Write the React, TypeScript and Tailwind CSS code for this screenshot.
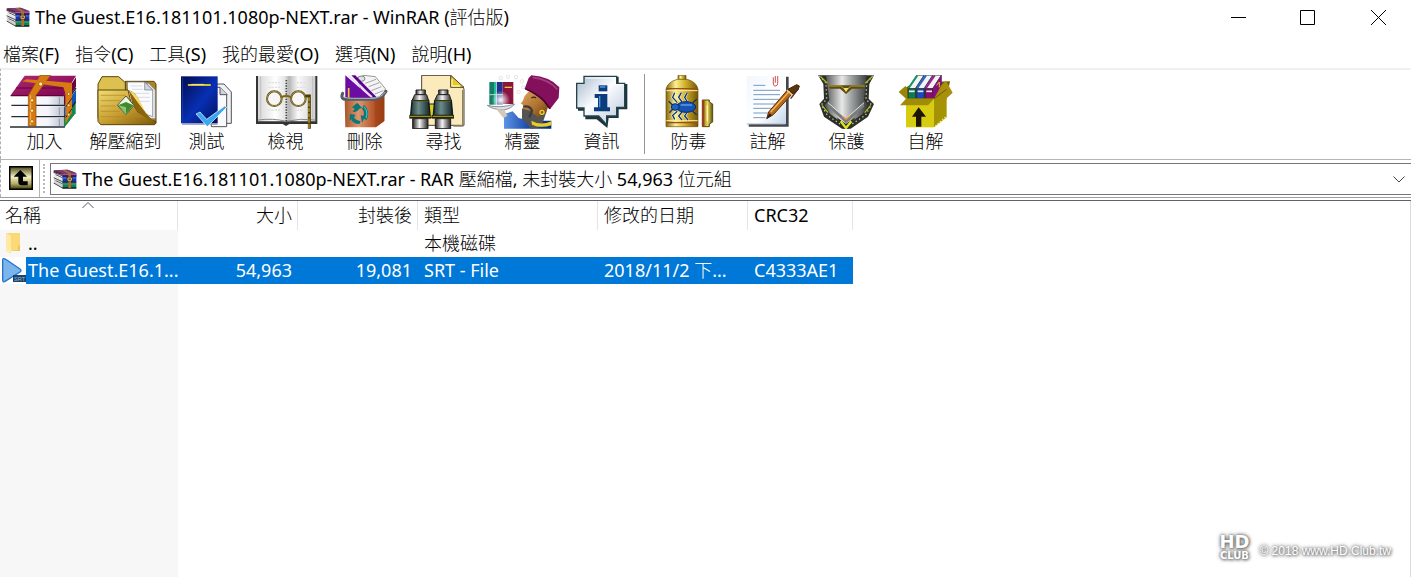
import { useState } from 'react'
import type { ReactNode } from 'react'
import clsx from 'clsx'

const ARCHIVE = 'The Guest.E16.181101.1080p-NEXT.rar'

const MENUS = ['檔案(F)', '指令(C)', '工具(S)', '我的最愛(O)', '選項(N)', '說明(H)']

function ArchiveIcon() {
  return (
    <svg viewBox="0 0 72 60" className="h-5 w-6 shrink-0" aria-hidden="true">
      <path d="M2 4 L44 2 L70 12 L70 22 L28 22 L2 12z" fill="#5c2450" />
      <path d="M4 4 L44 2 L68 11 L28 13z" fill="#7c3c70" />
      <path d="M28 14 L70 13 L70 22 L28 22z" fill="#b050a8" />
      <path d="M28 22 L70 22 L70 38 L28 38z" fill="#1531c8" />
      <path d="M28 40 L70 40 L70 57 L28 57z" fill="#128a35" />
      <path d="M30 27h38M30 45h38" stroke="#4c8cf0" strokeWidth="3" />
      <path d="M2 10 L28 18 L28 22 L8 16 L8 20 L28 28 L28 36 L4 26z" fill="#e8e8e8" />
      <path d="M2 27 L28 37 L28 40 L8 34 L8 38 L28 46 L28 56 L4 44z" fill="#d0d0d0" />
      <path d="M2 10 L28 20M2 26 L28 38M2 42 L28 57M8 17 L28 26M8 35 L28 44" stroke="#333" strokeWidth="2.5" />
      <path d="M28 21h42M28 39h42M28 57h42" stroke="#161632" strokeWidth="4" />
      <path d="M34 2 L54 12 V57 H46 V14 L28 4z" fill="#a87030" />
      <rect x="41" y="23" width="18" height="14" fill="#4a2a10" />
      <path d="M45 27h10v7H45z" fill="none" stroke="#e0c080" strokeWidth="3" />
    </svg>
  )
}

function AddIcon() {
  return (
    <svg viewBox="15 21 237 162" className="h-[54px] w-[79px]" aria-hidden="true">
      <defs>
        <linearGradient id="addCover" x1="0" y1="0" x2="1" y2="1">
          <stop offset="0" stopColor="#b02a76" />
          <stop offset="1" stopColor="#7e004c" />
        </linearGradient>
        <linearGradient id="addPages" x1="0" x2="1">
          <stop offset="0" stopColor="#fff" />
          <stop offset="0.7" stopColor="#f4f4fa" />
          <stop offset="1" stopColor="#b9bfce" />
        </linearGradient>
      </defs>
      {/* spines */}
      <path d="M192 150 L227 104 V136 L192 180z" fill="#128a4c" />
      <path d="M192 118 L228 65 V100 L192 147z" fill="#1454b4" />
      <path d="M190 84 L228 28 V56 L192 112z" fill="#6c0440" />
      <path d="M192 114 L228 60M192 148 L227 102" stroke="#0c1c34" strokeWidth="4" />
      {/* page blocks */}
      <path d="M32 84h160v27H36zM34 115h158v29H36zM34 149h158v26H34z" fill="url(#addPages)" />
      <path d="M34 112h158M34 146h158M30 177h164" stroke="#242c34" strokeWidth="4" />
      <path d="M178 88V110M178 118V142M178 152V174" stroke="#8c98b0" strokeWidth="3" />
      <path d="M74 23 L228 23 L191 83 L32 82z" fill="url(#addCover)" />
      <path d="M48 60H200" stroke="#5c0838" strokeWidth="3" />
      <path d="M32 83H191" stroke="#600038" strokeWidth="4" />
      {/* straps */}
      <path d="M120 22h32L108 82v92H85V82z" fill="#d87a12" stroke="#8a4a08" strokeWidth="2" />
      <path d="M66 40 L80 34 L212 44 L216 62 L190 58z" fill="#d87a12" />
      <path d="M190 58 L216 44 V134 L196 168 V76z" fill="#d87a12" />
      <path d="M198 116l18-26M198 148l18-26" stroke="#16283c" strokeWidth="3" />
      <path d="M92 82v90" stroke="#ffb54a" strokeWidth="3" />
      <g fill="#fff0b0" stroke="#965a08" strokeWidth="2">
        <circle cx="122" cy="48" r="6" />
        <circle cx="96" cy="97" r="5" />
        <circle cx="96" cy="128" r="5" />
        <circle cx="96" cy="160" r="5" />
        <circle cx="206" cy="78" r="4" />
        <circle cx="206" cy="112" r="4" />
        <circle cx="206" cy="140" r="4" />
      </g>
    </svg>
  )
}

function ExtractIcon() {
  return (
    <svg viewBox="258 21 237 162" className="h-[54px] w-[79px]" aria-hidden="true">
      <defs>
        <linearGradient id="exFolder" x1="0" y1="0" x2="1" y2="1">
          <stop offset="0" stopColor="#f0dc74" />
          <stop offset="0.5" stopColor="#c8a034" />
          <stop offset="1" stopColor="#7c5808" />
        </linearGradient>
      </defs>
      <path d="M294 48 L306 26 H356 L374 42 H378 V160 H300 L294 150z" fill="#dcc050" stroke="#5c4408" strokeWidth="3" />
      <path d="M376 40H462L468 48V166H376z" fill="#a88424" stroke="#5c4408" strokeWidth="3" />
      <path d="M390 46H446L466 66V152L430 152z" fill="#e8ecf2" stroke="#70767e" strokeWidth="2" />
      <path d="M382 42H434L458 66V146L384 120z" fill="#fafbfd" stroke="#70767e" strokeWidth="2" />
      <path d="M434 42V66H458z" fill="#cfd6e2" stroke="#70767e" strokeWidth="2" />
      <path d="M392 54H426M396 64H430M402 76H448M410 88H450M418 100H450" stroke="#d8dce4" strokeWidth="3" />
      <path d="M294 66 H384 L392 100 L414 132 L468 162 L464 170 H302 L294 160z" fill="url(#exFolder)" stroke="#5c4408" strokeWidth="3" />
      <path d="M302 82H376M302 98H360M302 114H346M302 130H360M302 146H426" stroke="#b48a20" strokeWidth="3" opacity="0.7" />
      <path d="M384 66 Q392 80 396 108 Q420 146 464 162 Q432 134 420 104 Q410 72 384 66z" fill="#8c640c" />
      <path d="M386 66 Q412 76 424 108 Q436 138 462 158 Q430 128 414 104z" fill="#f4d870" />
      <path d="M378 84 L402 112 L378 140 L352 112z" fill="#eef6e4" stroke="#485838" strokeWidth="3" />
      <path d="M354 112 L378 102 L400 112 L378 138z" fill="#3e8a2e" />
      <path d="M378 118v20L356 112z" fill="#8cc470" />
    </svg>
  )
}

function TestIcon() {
  return (
    <svg viewBox="501 21 237 162" className="h-[54px] w-[79px]" aria-hidden="true">
      <defs>
        <linearGradient id="testBook" x1="0" y1="0" x2="1" y2="1">
          <stop offset="0" stopColor="#020a4c" />
          <stop offset="0.55" stopColor="#0830b4" />
          <stop offset="1" stopColor="#02105c" />
        </linearGradient>
      </defs>
      <path d="M640 48H672L694 72V166H640z" fill="#eef0f4" stroke="#555" strokeWidth="3" />
      <path d="M634 58H660L680 78V176H634z" fill="#fafafc" stroke="#555" strokeWidth="3" />
      <path d="M660 58V80H682" fill="#ccd2de" stroke="#555" strokeWidth="3" />
      <rect x="543" y="25" width="110" height="141" fill="url(#testBook)" />
      <path d="M548 25v140" stroke="#2448b0" strokeWidth="2" />
      <path d="M546 168H652" stroke="#8c94ac" strokeWidth="4" />
      <path d="M566 51H630" stroke="#d8c030" strokeWidth="6" strokeLinecap="round" />
      <path d="M574 49H612" stroke="#fffbd0" strokeWidth="2" />
      <path d="M588 138 L600 132 L620 154 L674 114 L680 118 L622 176z" fill="#38a8f4" stroke="#fff" strokeWidth="2" />
    </svg>
  )
}

function ViewIcon() {
  return (
    <svg viewBox="18 21 237 162" className="h-[54px] w-[79px]" aria-hidden="true">
      <defs>
        <linearGradient id="viewPage" x1="0" x2="1">
          <stop offset="0" stopColor="#d6d6d6" />
          <stop offset="0.3" stopColor="#fff" />
          <stop offset="0.47" stopColor="#e4e4e4" />
          <stop offset="0.54" stopColor="#b4b4b4" />
          <stop offset="0.7" stopColor="#fafafa" />
          <stop offset="1" stopColor="#d0d0d0" />
        </linearGradient>
      </defs>
      <path d="M48 24H232V168H148L138 174L128 168H48z" fill="#343434" />
      <path d="M54 24H226V160H54z" fill="url(#viewPage)" />
      <path d="M54 156Q100 150 138 160Q180 150 226 156" fill="none" stroke="#888" strokeWidth="3" />
      <path d="M62 26V152M218 26V152" stroke="#b4b4b4" strokeWidth="2" />
      <path d="M139 36V160" stroke="#444" strokeWidth="5" strokeDasharray="4 4" />
      <path d="M84 44h36M84 58h36M160 44h40M160 58h40M84 126h36M160 126h30" stroke="#e0e0e0" strokeWidth="4" strokeDasharray="7 3" />
      <circle cx="103" cy="92" r="22" fill="#f6f6f6" stroke="#5c4810" strokeWidth="6" />
      <circle cx="175" cy="92" r="22" fill="#f6f6f6" stroke="#5c4810" strokeWidth="6" />
      <circle cx="103" cy="92" r="22" fill="none" stroke="#c8b468" strokeWidth="2" />
      <circle cx="175" cy="92" r="22" fill="none" stroke="#c8b468" strokeWidth="2" />
      <path d="M124 88Q138 80 154 88" fill="none" stroke="#7c6410" strokeWidth="6" />
      <path d="M196 84H208V182" fill="none" stroke="#4c3c08" strokeWidth="9" />
      <path d="M207 88V180" stroke="#e0c040" strokeWidth="3" strokeDasharray="12 4" />
    </svg>
  )
}

function DeleteIcon() {
  return (
    <svg viewBox="255 21 237 162" className="h-[54px] w-[79px]" aria-hidden="true">
      <defs>
        <linearGradient id="delBin" x1="0" x2="1">
          <stop offset="0" stopColor="#a85428" />
          <stop offset="0.35" stopColor="#dc9670" />
          <stop offset="0.8" stopColor="#b04c20" />
          <stop offset="1" stopColor="#7c2c0c" />
        </linearGradient>
      </defs>
      <path d="M352 30 L372 22 L406 26 L436 62 L430 88 H370z" fill="#f4f4f6" stroke="#666" strokeWidth="2" />
      <path d="M376 46L408 34M386 56L418 44M394 68L424 56M404 78L430 68" stroke="#a4a4a4" strokeWidth="3" />
      <ellipse cx="364" cy="32" rx="11" ry="8" fill="#dce0e4" stroke="#555" strokeWidth="2" />
      <path d="M316 22 L394 90 H316z" fill="#6c0ca4" />
      <path d="M334 22 H346 L410 88 H398z" fill="#5c0090" />
      <path d="M326 23 L396 86" stroke="#e8d8fc" strokeWidth="4" />
      <path d="M326 60V90" stroke="#e8cc28" strokeWidth="5" />
      <path d="M314 92 H404 L432 84 V160 L408 178 H316z" fill="url(#delBin)" />
      <path d="M404 94 L434 80 V158 L406 178z" fill="#a44418" opacity="0.75" />
      <path d="M308 76 Q300 94 320 94 H404 Q424 92 438 70" fill="none" stroke="#545c64" strokeWidth="9" strokeLinecap="round" />
      <path d="M310 86 Q320 92 340 91 H402 Q424 88 436 72" fill="none" stroke="#b0b8c0" strokeWidth="3" />
      <g fill="#087878">
        <path d="M352 104 L366 120 L358 122 Q352 132 338 132 L344 122 L336 118z" />
        <path d="M372 110 Q392 128 380 156 L372 152 L366 164 L362 142 L370 144 Q376 132 366 122z" />
        <path d="M330 138 L346 140 L342 150 Q350 158 362 160 L358 168 Q338 168 334 154 L328 158z" />
      </g>
      <path d="M372 116 Q386 132 378 150" fill="none" stroke="#5cd0d0" strokeWidth="3" />
    </svg>
  )
}

function FindIcon() {
  return (
    <svg viewBox="492 21 237 162" className="h-[54px] w-[79px]" aria-hidden="true">
      <defs>
        <linearGradient id="findTube" x1="0" x2="1">
          <stop offset="0" stopColor="#1c3434" />
          <stop offset="0.4" stopColor="#6c8c8c" />
          <stop offset="1" stopColor="#142626" />
        </linearGradient>
        <linearGradient id="findSteel" x1="0" x2="1">
          <stop offset="0" stopColor="#222" />
          <stop offset="0.45" stopColor="#f4f4f4" />
          <stop offset="1" stopColor="#222" />
        </linearGradient>
      </defs>
      <path d="M545 22H632L672 62V172H545z" fill="#fbebbc" stroke="#4c4430" strokeWidth="3" />
      <path d="M632 22V58H672z" fill="#e8c828" stroke="#4c4430" strokeWidth="3" />
      <path d="M636 34V54H660" fill="none" stroke="#fff4a0" strokeWidth="4" />
      <path d="M668 66V174H640" fill="none" stroke="#8c8468" strokeWidth="4" />
      <rect x="566" y="108" width="20" height="40" fill="#e0cc20" stroke="#222" strokeWidth="3" />
      {[0, 68].map((dx) => (
        <g key={dx} transform={`translate(${dx} 0)`}>
          <path d="M528 66H556V80H528z" fill="url(#findSteel)" stroke="#222" strokeWidth="3" />
          <path d="M524 80H560L566 98H516z" fill="url(#findSteel)" stroke="#222" strokeWidth="3" />
          <path d="M516 98H566L570 142H512z" fill="url(#findTube)" stroke="#0c1818" strokeWidth="4" />
          <path d="M516 99H566" stroke="#8c7c18" strokeWidth="2" />
          <rect x="508" y="141" width="66" height="11" fill="#242408" />
          <path d="M510 145H572" stroke="#b8a420" strokeWidth="3" />
          <path d="M518 152H564V182H518z" fill="url(#findSteel)" stroke="#222" strokeWidth="3" />
        </g>
      ))}
    </svg>
  )
}

function WizardIcon() {
  return (
    <svg viewBox="39 21 237 162" className="h-[54px] w-[79px]" aria-hidden="true">
      <defs>
        <linearGradient id="wizFace" x1="0" y1="0" x2="1" y2="1">
          <stop offset="0" stopColor="#e4a860" />
          <stop offset="0.6" stopColor="#a86c2c" />
          <stop offset="1" stopColor="#5c3808" />
        </linearGradient>
        <linearGradient id="wizRobe" x1="0" x2="1">
          <stop offset="0" stopColor="#5c94e4" />
          <stop offset="0.5" stopColor="#1c4cac" />
          <stop offset="1" stopColor="#0c2870" />
        </linearGradient>
        <radialGradient id="wizGlow">
          <stop offset="0" stopColor="#fff" />
          <stop offset="1" stopColor="#fff" stopOpacity="0" />
        </radialGradient>
      </defs>
      <g fill="none" stroke="#e4e4e4" strokeWidth="3">
        <circle cx="92" cy="30" r="5" />
        <circle cx="114" cy="26" r="5" />
        <circle cx="138" cy="27" r="5" />
        <circle cx="156" cy="40" r="5" />
        <circle cx="160" cy="58" r="5" />
        <circle cx="146" cy="72" r="5" />
      </g>
      {/* books on the tray */}
      <path d="M58 42H72V110H58z" fill="#147c68" />
      <path d="M72 42H78V110H72z" fill="#20c094" />
      <path d="M80 42H98V110H80z" fill="#1c348c" />
      <path d="M98 42H130V108H98z" fill="#8a1440" />
      <path d="M104 58H126" stroke="#e8c840" strokeWidth="4" />
      <path d="M58 80H98" stroke="#a0e8d8" strokeWidth="3" />
      <circle cx="92" cy="96" r="28" fill="url(#wizGlow)" />
      <path d="M52 112Q92 122 134 108Q124 122 100 126Q66 124 52 112z" fill="#dce0e8" stroke="#8c9098" strokeWidth="3" />
      {/* body */}
      <path d="M102 138L128 130L146 150L180 158H244V182H102z" fill="url(#wizRobe)" />
      <path d="M78 122L104 126L112 144L100 150z" fill="#d4c8b8" />
      <path d="M156 122L176 112L206 128L230 130L214 176L184 182L156 152z" fill="#545454" />
      <path d="M180 66L164 84L158 100L152 106L160 112L158 122L180 128L204 148L228 134L240 102L214 78z" fill="url(#wizFace)" />
      <path d="M184 90q8-5 14 0" fill="none" stroke="#3c2004" strokeWidth="4" />
      <path d="M160 116Q180 112 186 128L178 148" fill="none" stroke="#3c3c3c" strokeWidth="7" />
      <circle cx="216" cy="133" r="6" fill="none" stroke="#f0d430" strokeWidth="4" />
      {/* fez */}
      <path d="M184 22L176 30L164 62Q196 78 218 98L240 124L266 90L268 58Q240 26 184 22z" fill="#84105c" />
      <path d="M188 28Q236 34 262 64" fill="none" stroke="#a43c84" strokeWidth="5" />
      <path d="M166 62Q200 76 222 98L240 122" fill="none" stroke="#4c0434" strokeWidth="5" />
      <path d="M184 158Q212 174 244 160V172Q212 182 186 170z" fill="#e8cc28" />
    </svg>
  )
}

function InfoIcon() {
  return (
    <svg viewBox="276 21 237 162" className="h-[54px] w-[79px]" aria-hidden="true">
      <defs>
        <linearGradient id="infoBox" x1="0" y1="0" x2="1" y2="1">
          <stop offset="0" stopColor="#a8b8cc" />
          <stop offset="0.45" stopColor="#fafcff" />
          <stop offset="1" stopColor="#b4c4d8" />
        </linearGradient>
      </defs>
      <path d="M346 26H446V48H472V124H446V150H416L412 180L380 154H346V128H324V48H346z" fill="#1c343c" />
      <path d="M342 25H440V46H464V118H440V144H410V170L386 144H342V120H320V46H342z" fill="url(#infoBox)" stroke="#24444c" strokeWidth="4" />
      <path d="M346 30H436V50H460" fill="none" stroke="#fff" strokeWidth="3" />
      <g fill="#0c3c7c">
        <rect x="386" y="52" width="26" height="18" />
        <path d="M374 78H412V118H420V130H372V118H384V90H374z" />
      </g>
      <path d="M390 57H406M389 84V118" stroke="#4898e0" strokeWidth="4" />
    </svg>
  )
}

function VirusIcon() {
  return (
    <svg viewBox="537 21 237 162" className="h-[54px] w-[79px]" aria-hidden="true">
      <defs>
        <linearGradient id="virCan" x1="0" x2="1">
          <stop offset="0" stopColor="#86680c" />
          <stop offset="0.3" stopColor="#fcf090" />
          <stop offset="0.6" stopColor="#d0b02c" />
          <stop offset="1" stopColor="#745404" />
        </linearGradient>
        <linearGradient id="virCap" x1="0" x2="1">
          <stop offset="0" stopColor="#8c6010" />
          <stop offset="0.5" stopColor="#e8d858" />
          <stop offset="1" stopColor="#5c5010" />
        </linearGradient>
      </defs>
      <path d="M624 22H648V36H624z" fill="url(#virCan)" stroke="#6c5008" strokeWidth="2" />
      <path d="M588 64Q592 42 622 34H652Q680 42 684 64V176H588z" fill="url(#virCan)" stroke="#6c5008" strokeWidth="2" />
      <path d="M589 62H683M589 164H683" stroke="#a04c1c" strokeWidth="4" />
      <path d="M589 68H683M589 158H683" stroke="#f8f0a0" strokeWidth="3" />
      <path d="M697 96H718V102L728 108V162L718 168V176H697z" fill="url(#virCap)" stroke="#5c4810" strokeWidth="3" />
      <path d="M700 98V174" stroke="#a43c1c" strokeWidth="6" />
      <path d="M712 112V160" stroke="#fcf8b0" strokeWidth="4" />
      <g fill="none" stroke="#f4f8fc" strokeWidth="7">
        <path d="M622 104L608 88L614 74M636 102L626 88L634 74M652 102L644 88L652 74M622 130L608 142L614 154M636 132L626 144L636 156M652 132L644 144L654 156" />
      </g>
      <g fill="none" stroke="#103468" strokeWidth="4">
        <path d="M622 104L608 88L614 74M636 102L626 88L634 74M652 102L644 88L652 74M622 130L608 142L614 154M636 132L626 144L636 156M652 132L644 144L654 156M608 112L596 100M608 124L598 134" />
      </g>
      <path d="M668 104L680 94M668 130L680 140" stroke="#103468" strokeWidth="4" />
      <ellipse cx="648" cy="117" rx="29" ry="16" fill="#1454b4" stroke="#082868" strokeWidth="3" />
      <ellipse cx="616" cy="117" rx="12" ry="10" fill="#1c64c4" stroke="#082868" strokeWidth="3" />
      <path d="M632 111H666" stroke="#68a4ec" strokeWidth="4" />
    </svg>
  )
}

function CommentIcon() {
  return (
    <svg viewBox="24 21 237 162" className="h-[54px] w-[79px]" aria-hidden="true">
      <defs>
        <linearGradient id="comPage" x1="0" y1="0" x2="1" y2="1">
          <stop offset="0" stopColor="#f2f7fd" />
          <stop offset="0.6" stopColor="#fff" />
          <stop offset="1" stopColor="#c0d4ec" />
        </linearGradient>
      </defs>
      <path d="M90 26H206V176H86z" fill="#44464c" />
      <path d="M80 24H198V168H80z" fill="url(#comPage)" />
      <path d="M80 168H196" stroke="#a8b4c8" strokeWidth="3" />
      <path d="M100 52H136M100 67H180M100 80H180M100 94H176M100 108H166M100 121H158M100 135H144M100 149H136" stroke="#7898c4" strokeWidth="3" />
      <path d="M160 28V48Q162 56 168 54Q173 52 173 46V24M166 24V44" fill="none" stroke="#d45050" strokeWidth="3" />
      <path d="M140 152L146 132L204 64L218 76L160 140z" fill="#b86818" stroke="#54300c" strokeWidth="3" />
      <path d="M204 64L230 50L238 54L234 66L218 78z" fill="#5c3410" stroke="#3c2008" strokeWidth="3" />
      <path d="M152 132L208 70" stroke="#f8bc58" strokeWidth="4" />
      <path d="M140 152L148 136L156 142z" fill="#2c1c08" />
      <path d="M200 66L218 82" stroke="#f0d890" strokeWidth="4" />
      <path d="M232 66L212 92" stroke="#54300c" strokeWidth="4" />
    </svg>
  )
}

function ProtectIcon() {
  return (
    <svg viewBox="261 21 237 162" className="h-[54px] w-[79px]" aria-hidden="true">
      <defs>
        <linearGradient id="proSteel" x1="0" x2="1">
          <stop offset="0" stopColor="#4c5050" />
          <stop offset="0.4" stopColor="#e8e8e8" />
          <stop offset="0.6" stopColor="#a4a8a8" />
          <stop offset="1" stopColor="#343838" />
        </linearGradient>
      </defs>
      <path d="M294 22H462L448 48L446 92L462 108L444 146L392 182H366L312 146L298 108L312 92L310 48z" fill="#2c3028" />
      <path d="M318 22H440L432 96L444 112L428 138L378 172L330 138L314 112L328 96z" fill="url(#proSteel)" />
      <path d="M298 24L318 44L320 94L304 110L322 142L378 180L436 142L454 110L438 94L440 44L458 24" fill="none" stroke="#c4ccb0" strokeWidth="4" strokeDasharray="4 8" />
      <path d="M302 26L322 46M456 26L436 46M306 112L324 134M452 112L434 134" stroke="#b0b820" strokeWidth="4" />
      <path d="M322 52H436L428 62H396L378 78L360 62H330z" fill="#5c4c10" />
      <path d="M324 54H362L378 66L394 54H434" fill="none" stroke="#b89c38" strokeWidth="3" />
      <path d="M370 60H386L378 72z" fill="#f4e070" />
      <path d="M324 104L378 152L432 104V116L378 166L324 116z" fill="#787c7c" />
      <path d="M324 104L378 152L432 104" fill="none" stroke="#e4e4e4" strokeWidth="3" />
      <path d="M350 148L378 168L406 148L386 182H370z" fill="#2c2c0c" />
      <path d="M362 160L378 180L394 160" fill="none" stroke="#e0e428" strokeWidth="7" />
      <path d="M366 144L378 154L390 144" fill="none" stroke="#e89048" strokeWidth="4" />
    </svg>
  )
}

function SfxIcon() {
  return (
    <svg viewBox="498 21 237 162" className="h-[54px] w-[79px]" aria-hidden="true">
      <path d="M556 60L580 44L690 40L678 98H558z" fill="#6c5c04" />
      {[
        { dx: 0, side: '#0c7c50', top: '#149464' },
        { dx: 26, side: '#1c48b8', top: '#2c64d8' },
        { dx: 52, side: '#8c0c6c', top: '#a4208c' },
      ].map(({ dx, side, top }) => (
        <g key={dx} transform={`translate(${dx} 0)`}>
          <path d="M564 62L590 22H612L586 62z" fill="#f4f4f4" stroke="#444" strokeWidth="2" />
          <path d="M586 62L612 22V60L588 92z" fill={top} stroke="#333" strokeWidth="2" />
          <path d="M566 60L592 22" stroke={top} strokeWidth="6" />
          <path d="M564 62H587V92H564z" fill={side} stroke="#222" strokeWidth="2" />
          <path d="M567 70H584" stroke="#e8ecf4" strokeWidth="5" />
        </g>
      ))}
      <path d="M640 60L664 22V70L640 92z" fill="#84107c" />
      <path d="M650 52L658 42V58" fill="none" stroke="#e8c030" strokeWidth="3" />
      <path d="M558 92H642V178H558z" fill="#d8cc10" />
      <path d="M642 92L680 64V148L642 178z" fill="#a49404" />
      <path d="M646 174L678 146" stroke="#f0e860" strokeWidth="4" strokeDasharray="5 4" />
      <path d="M558 92L536 72L556 54L562 60V92z" fill="#9c8408" />
      <path d="M558 92H642L624 112H540z" fill="#a08c08" />
      <path d="M642 92L664 52L678 38L698 74L670 100z" fill="#a8900c" />
      <path d="M642 92L680 64" stroke="#6c5c04" strokeWidth="3" />
      <path d="M596 118L618 146H604V176H588V146H576z" fill="#1c1404" />
    </svg>
  )
}

interface Tool {
  label: string
  icon:  ReactNode
  wide?: boolean
}

const TOOLS: Tool[] = [
  { label: '加入',     icon: <AddIcon /> },
  { label: '解壓縮到', icon: <ExtractIcon />, wide: true },
  { label: '測試',     icon: <TestIcon /> },
  { label: '檢視',     icon: <ViewIcon /> },
  { label: '刪除',     icon: <DeleteIcon /> },
  { label: '尋找',     icon: <FindIcon /> },
  { label: '精靈',     icon: <WizardIcon /> },
  { label: '資訊',     icon: <InfoIcon /> },
]

const EXTRA_TOOLS: Tool[] = [
  { label: '防毒', icon: <VirusIcon /> },
  { label: '註解', icon: <CommentIcon /> },
  { label: '保護', icon: <ProtectIcon /> },
  { label: '自解', icon: <SfxIcon /> },
]

function ToolButton({ label, icon, wide }: Tool) {
  return (
    <button
      className={clsx(
        'flex shrink-0 flex-col items-center pt-[5px] hover:bg-sky-50',
        wide ? 'w-[83px]' : 'w-[79px]',
      )}
    >
      {icon}
      <span className="leading-6">{label}</span>
    </button>
  )
}

function TitleBar() {
  return (
    <header className="flex h-[34px] items-center pl-[6px]">
      <ArchiveIcon />
      <h1 className="flex-1 truncate pl-[5px]">{ARCHIVE} - WinRAR (評估版)</h1>
      <button aria-label="Minimize" className="flex h-full w-[69px] items-center justify-center hover:bg-gray-200">
        <svg viewBox="0 0 15 15" className="size-[15px]"><path d="M0 7.5H15" stroke="#000" /></svg>
      </button>
      <button aria-label="Maximize" className="flex h-full w-[69px] items-center justify-center hover:bg-gray-200">
        <svg viewBox="0 0 15 15" className="size-[15px]"><path d="M.5 .5H14.5V14.5H.5z" fill="none" stroke="#000" /></svg>
      </button>
      <button aria-label="Close" className="flex h-full w-[69px] items-center justify-center pl-1 hover:bg-red-500">
        <svg viewBox="0 0 15 15" className="size-[15px]"><path d="M0 0L15 15M15 0L0 15" stroke="#000" /></svg>
      </button>
    </header>
  )
}

function AddressBar() {
  return (
    <div className="flex h-[38px] border-t border-[#b4b4ba]">
      <div className="flex w-10 justify-center border-r border-l border-l-[#b0b0b0] border-r-[#b4b4b4] pt-[6px] pl-[2px] [border-left-style:dashed]">
        <button aria-label="Up one level" className="size-6">
          <svg viewBox="0 0 72 72" className="size-6">
            <defs>
              <linearGradient id="upFill" x1="0" y1="0" x2="0" y2="1">
                <stop offset="0" stopColor="#4c4818" />
                <stop offset="0.45" stopColor="#f4f0c4" />
                <stop offset="0.75" stopColor="#b4ac68" />
                <stop offset="1" stopColor="#38340c" />
              </linearGradient>
            </defs>
            <rect x="2" y="2" width="68" height="68" fill="url(#upFill)" stroke="#000" strokeWidth="5" />
            <path d="M34 12L54 32H42V46H56V58H38Q28 58 28 48V32H14z" fill="#000" />
          </svg>
        </button>
      </div>
      <div className="my-1 ml-[3px] w-[7px] border-l-2 border-dotted border-[#b8b8b8]" />
      <div className="relative mt-[3px] h-8 flex-1 border-y border-l border-[#767676]">
        <div className="pointer-events-none absolute top-[5px] left-[2px]">
          <ArchiveIcon />
        </div>
        <select
          aria-label="Archive path"
          className="block h-[30px] w-full appearance-none truncate bg-transparent pl-[31px] outline-none"
        >
          <option>{ARCHIVE} - RAR 壓縮檔, 未封裝大小 54,963 位元組</option>
        </select>
        <svg viewBox="0 0 12 7" className="pointer-events-none absolute top-3 right-[6px] h-[7px] w-3">
          <path d="M.5 .5L6 6L11.5 .5" fill="none" stroke="#444" />
        </svg>
      </div>
    </div>
  )
}

function FileTable() {
  const [selected, setSelected] = useState(true)

  return (
    <table className="w-[853px] table-fixed border-separate border-spacing-0 text-left">
      <colgroup>
        <col className="w-[178px]" />
        <col className="w-[120px]" />
        <col className="w-[120px]" />
        <col className="w-[180px]" />
        <col className="w-[150px]" />
        <col className="w-[105px]" />
      </colgroup>
      <thead>
        <tr className="h-[29px] bg-white *:border-r *:border-[#e5e5e5] *:p-0 *:font-normal">
          <th className="relative">
            <span className="pl-[5px]">名稱</span>
            <svg viewBox="0 0 12 7" className="absolute top-px left-[82px] h-[7px] w-3">
              <path d="M.5 6L6 .5L11.5 6" fill="none" stroke="#555" />
            </svg>
          </th>
          <th className="text-right"><span className="pr-[5px]">大小</span></th>
          <th className="text-right"><span className="pr-[5px]">封裝後</span></th>
          <th><span className="pl-[6px]">類型</span></th>
          <th><span className="pl-[6px]">修改的日期</span></th>
          <th><span className="pl-[6px]">CRC32</span></th>
        </tr>
      </thead>
      <tbody>
        <tr className="h-[27px] *:p-0">
          <td>
            <div className="flex items-center">
              <svg viewBox="0 0 26 26" className="size-[26px]">
                <path d="M6 2H20V20H6z" fill="#fbd978" />
                <path d="M6 2L11 5V23L6 20z" fill="#ffe9a6" />
                <path d="M18 15L20 14V20H11L18 19z" fill="#eec75c" />
              </svg>
              <span className="pl-[2px]">..</span>
            </div>
          </td>
          <td />
          <td />
          <td className="whitespace-nowrap"><span className="pl-[6px]">本機磁碟</span></td>
          <td />
          <td />
        </tr>
        <tr
          onClick={() => setSelected(!selected)}
          className={clsx('h-[27px] whitespace-nowrap *:p-0', selected && 'text-white *:not-first:bg-[#0078d7]')}
        >
          <td>
            <div className="flex h-[27px] items-center">
              <svg viewBox="0 0 78 81" className="h-[27px] w-[26px] shrink-0 bg-white">
                <path d="M8 10Q8 2 16 6L60 36Q66 40 60 45L14 74Q8 76 8 68z" fill="#7cb4ec" stroke="#2474cc" strokeWidth="4" />
                <rect x="39" y="54" width="39" height="21" fill="#1c4468" />
                <text x="42" y="71" fontSize="17" fill="#8cb8dc" fontFamily="Liberation Sans, sans-serif">SRT</text>
              </svg>
              <span className={clsx('flex h-full flex-1 items-center pl-[2px]', selected && 'bg-[#0078d7]')}>
                The Guest.E16.1...
              </span>
            </div>
          </td>
          <td className="text-right"><span className="pr-[6px]">54,963</span></td>
          <td className="text-right"><span className="pr-[6px]">19,081</span></td>
          <td><span className="pl-[6px]">SRT - File</span></td>
          <td><span className="pl-[6px]">2018/11/2 下...</span></td>
          <td><span className="pl-[6px]">C4333AE1</span></td>
        </tr>
      </tbody>
    </table>
  )
}

function Watermark() {
  return (
    <div className="absolute right-5 bottom-4 flex items-center gap-[5px] text-white [text-shadow:0_0_3px_#666,0_0_5px_#888,1px_1px_3px_#888]">
      <div className="flex w-10 flex-col items-center font-bold [font-family:'DejaVu_Sans',sans-serif]">
        <span className="text-[18px] leading-[18px]">HD</span>
        <span className="text-[10px] leading-[10px]">CLUB</span>
      </div>
      <span className="pt-[7px] text-xs [font-family:'Liberation_Sans',sans-serif]">© 2018 www.HD.Club.tw</span>
    </div>
  )
}

export default function App() {
  return (
    <div className="relative flex min-h-screen flex-col overflow-hidden bg-white text-[18px] leading-[27px] text-black [font-family:'Noto_Sans','Noto_Sans_CJK_TC_Light','Noto_Sans_CJK_TC',sans-serif]">
      <TitleBar />
      <nav className="flex h-[34px] items-center gap-4 pt-[6px] pl-[3px]">
        {MENUS.map((menu) => (
          <button key={menu} className="hover:bg-sky-100">{menu}</button>
        ))}
      </nav>

      <div className="flex h-[91px] border-t-2 border-l border-t-[#f0f0f0] border-l-[#b0b0b0] pl-1 [border-left-style:dashed]">
        {TOOLS.map((tool) => (
          <ToolButton key={tool.label} {...tool} />
        ))}
        <div className="mt-1 mr-1 ml-[3px] h-20 w-px shrink-0 bg-[#969696]" />
        {EXTRA_TOOLS.map((tool) => (
          <ToolButton key={tool.label} {...tool} />
        ))}
      </div>

      <AddressBar />

      <div className="h-1 border-y border-t-[#9c9ca4] border-b-[#606068]" />
      <main className="flex-1 border-r border-[#dcdcdc] bg-[linear-gradient(to_right,#f7f7f7_178px,#ffffff_178px)]">
        <FileTable />
      </main>
      <Watermark />
    </div>
  )
}
